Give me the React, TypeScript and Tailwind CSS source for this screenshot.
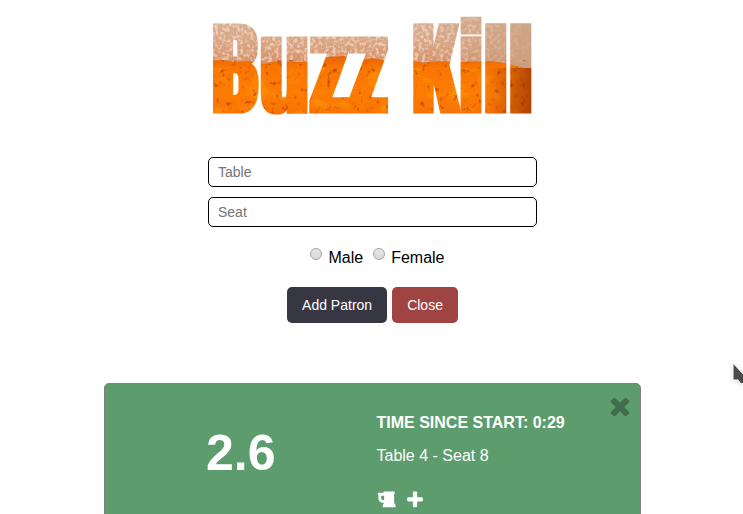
import { useState } from "react";

function Logo() {
  return (
    <h1 className="w-full">
      <svg viewBox="0 0 329 126" className="block h-[126px] w-full overflow-visible" role="img" aria-label="Buzz Kill">
        <defs>
          <linearGradient id="foam" x1="0" y1="0" x2="0" y2="1">
            <stop offset="0" stopColor="#d6b496" />
            <stop offset="0.5" stopColor="#d9a584" />
            <stop offset="0.85" stopColor="#d69066" />
            <stop offset="1" stopColor="#d07a40" />
          </linearGradient>
          <linearGradient id="ale" x1="0" y1="0" x2="0" y2="1">
            <stop offset="0" stopColor="#e86505" />
            <stop offset="0.2" stopColor="#fa7602" />
            <stop offset="0.6" stopColor="#fd7c02" />
            <stop offset="1" stopColor="#f87004" />
          </linearGradient>
          <linearGradient id="shade" x1="0" y1="0" x2="1" y2="0">
            <stop offset="0.82" stopColor="#8b2800" stopOpacity="0" />
            <stop offset="0.97" stopColor="#8b2800" stopOpacity="0.75" />
          </linearGradient>
          <linearGradient id="haze" x1="0" y1="0" x2="1" y2="0">
            <stop offset="0.65" stopColor="#cba283" stopOpacity="0" />
            <stop offset="0.95" stopColor="#cba283" stopOpacity="0.9" />
          </linearGradient>
          <filter id="bubbles" x="0" y="0" width="1" height="1">
            <feTurbulence type="fractalNoise" baseFrequency="0.28" numOctaves="2" seed="4" />
            <feColorMatrix values="0 0 0 0 1  0 0 0 0 0.9  0 0 0 0 0.8  4 0 0 0 -1.8" />
          </filter>
          <filter id="flecks" x="0" y="0" width="1" height="1" colorInterpolationFilters="sRGB">
            <feTurbulence type="fractalNoise" baseFrequency="0.16" numOctaves="3" seed="9" />
            <feColorMatrix values="0 0 0 0 0.65  0 0 0 0 0.2  0 0 0 0 0  5 0 0 0 -3.1" />
          </filter>
          <filter id="glints" x="0" y="0" width="1" height="1" colorInterpolationFilters="sRGB">
            <feTurbulence type="fractalNoise" baseFrequency="0.05 0.07" numOctaves="3" seed="21" />
            <feColorMatrix values="0 0 0 0 1  0 0 0 0 0.62  0 0 0 0 0.02  4 0 0 0 -2.1" />
          </filter>
          <pattern id="beer" patternUnits="userSpaceOnUse" width="340" height="126">
            <rect y="12" width="340" height="60" fill="url(#foam)" />
            <rect y="12" width="340" height="50" filter="url(#bubbles)" opacity="0.5" />
            <rect y="12" width="340" height="60" fill="url(#haze)" />
            <path
              d="M0 61L14 60L28 62L42 61L56 64L70 61L88 62L106 61L120 57L136 56L150 60L164 58L180 61L200 60L216 63L230 61L250 62L284 61L300 64L316 68L340 70V118H0z"
              fill="url(#ale)"
            />
            <rect y="68" width="340" height="50" filter="url(#glints)" opacity="0.5" />
            <rect y="60" width="340" height="58" filter="url(#flecks)" opacity="0.6" />
            <rect y="68" width="340" height="50" fill="url(#shade)" />
          </pattern>
        </defs>
        <text
          x="164"
          y="112"
          textAnchor="middle"
          fill="url(#beer)"
          className="font-['Anton','Impact','Oswald','Roboto_Condensed','Liberation_Sans_Narrow','Open_Sans_Condensed',sans-serif] text-[101px] font-bold"
        >
          Buzz Kill
        </text>
      </svg>
    </h1>
  );
}

const radioClass =
  "mb-2 size-3 appearance-none rounded-full border border-[#a5a5a5] bg-linear-to-b from-[#e6e6e6] to-[#d8d8d8] checked:bg-gray-600";
const inputClass =
  "h-[30px] w-full rounded-[5px] border border-black px-[9px] text-sm placeholder:text-[#757575]";

function PatronForm() {
  const [table, setTable] = useState("");
  const [seat, setSeat] = useState("");
  return (
    <form className="flex w-full flex-col items-center" onSubmit={(e) => e.preventDefault()}>
      <div className="flex w-full flex-col gap-2.5">
        <input aria-label="Table" placeholder="Table" value={table} onChange={(e) => setTable(e.target.value)} className={inputClass} />
        <input aria-label="Seat" placeholder="Seat" value={seat} onChange={(e) => setSeat(e.target.value)} className={inputClass} />
      </div>
      <div className="mt-[19px] flex gap-2.5 pl-2.5">
        <label className="flex items-center gap-1.5">
          <input type="radio" name="gender" value="male" className={radioClass} />
          Male
        </label>
        <label className="flex items-center gap-1.5">
          <input type="radio" name="gender" value="female" className={radioClass} />
          Female
        </label>
      </div>
      <div className="mt-[17px] flex gap-[5px] text-sm text-white">
        <button type="submit" className="h-9 rounded-[5px] bg-[#373643] px-[15px]">Add Patron</button>
        <button type="button" className="h-9 rounded-[5px] bg-[#9f4343] px-[15px]">Close</button>
      </div>
    </form>
  );
}

function Glyph({ d, className }: { d: string; className: string }) {
  return (
    <svg viewBox="0 0 1792 1792" fill="currentColor" className={className} aria-hidden="true">
      <path d={d} />
    </svg>
  );
}

const BEER =
  "M640 896v-384h-256v256q0 53 37.5 90.5t90.5 37.5h128zm1024 448v192h-1152v-192l128-192h-128q-159 0-271.5-112.5t-112.5-271.5v-320l-64-64 32-128h480l32-128h960l32 192-64 32v800z";
const PLUS =
  "M1600 736v192q0 40-28 68t-68 28h-416v416q0 40-28 68t-68 28h-192q-40 0-68-28t-28-68v-416h-416q-40 0-68-28t-28-68v-192q0-40 28-68t68-28h416v-416q0-40 28-68t68-28h192q40 0 68 28t28 68v416h416q40 0 68 28t28 68z";
const TIMES =
  "M1490 1322q0 40-28 68l-136 136q-28 28-68 28t-68-28l-294-294-294 294q-28 28-68 28t-68-28l-136-136q-28-28-28-68t28-68l294-294-294-294q-28-28-28-68t28-68l136-136q28-28 68-28t68 28l294 294 294-294q28-28 68-28t68 28l136 136q28 28 28 68t-28 68l-294 294 294 294q28 28 28 68z";

function PatronCard() {
  return (
    <section className="relative grid w-full max-w-[537px] grid-cols-2 rounded-[5px] border border-[#808080] bg-[#5c9c6d] pt-[27px] pb-10 text-white">
      <p className="pt-3 pl-1 text-center text-[50px] leading-[60px] font-bold">2.6</p>
      <div className="pl-1">
        <h2 className="leading-6 font-bold">TIME SINCE START: 0:29</h2>
        <p className="mt-[9px] leading-6">Table 4 - Seat 8</p>
        <div className="mt-[22px] flex gap-2">
          <button type="button" aria-label="Add drink">
            <Glyph d={BEER} className="size-5" />
          </button>
          <button type="button" aria-label="Add">
            <Glyph d={PLUS} className="size-5" />
          </button>
        </div>
      </div>
      <button type="button" aria-label="Remove patron" className="absolute top-2 right-1.5 text-[#416d4c]">
        <Glyph d={TIMES} className="size-7" />
      </button>
    </section>
  );
}

function Pointer() {
  return (
    <svg viewBox="0 0 12 22" className="absolute top-[362px] right-0 h-[22px] w-3 drop-shadow-sm" aria-hidden="true">
      <path d="M2 1v17h5l3 4 3-1V13z" fill="#4a4a4a" stroke="#fff" />
    </svg>
  );
}

export default function App() {
  return (
    <main className="relative flex h-screen flex-col items-center overflow-hidden bg-white pl-0.5 font-['Liberation_Sans',Arial,sans-serif] text-base text-black">
      <div className="flex w-full max-w-[329px] shrink-0 flex-col gap-[31px]">
        <Logo />
        <PatronForm />
      </div>
      <div className="mt-[60px] flex w-full shrink-0 justify-center">
        <PatronCard />
      </div>
      <Pointer />
    </main>
  );
}
